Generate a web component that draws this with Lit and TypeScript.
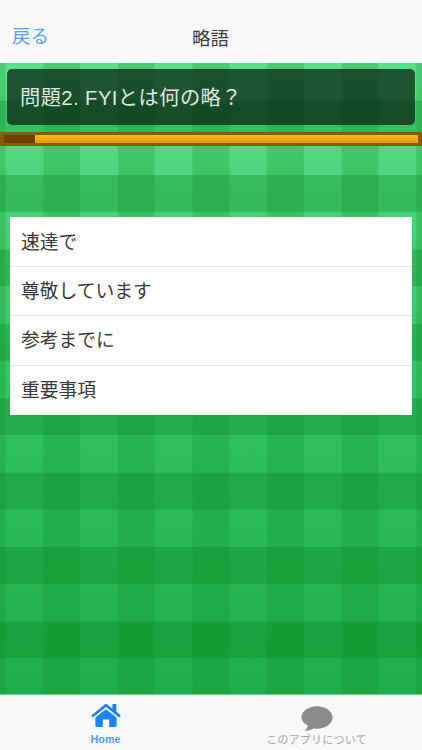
import { LitElement, html, css } from "lit";
import { customElement } from "lit/decorators.js";

@customElement("app-root")
export class AppRoot extends LitElement {
  static styles = css`
    :host {
      display: flex;
      flex-direction: column;
      width: 422px;
      height: 750px;
      overflow: hidden;
      font-family: "Liberation Sans", "Noto Sans CJK JP", sans-serif;
    }
    .nav {
      height: 63px;
      flex: none;
      background: #f8f8f8;
      display: grid;
      grid-template-columns: 1fr auto 1fr;
      padding: 25px 12px 0;
      box-sizing: border-box;
      font-size: 18.5px;
    }
    .back { color: #559df2; line-height: 24px; }
    .title { color: #3d3d3d; line-height: 24px; margin-top: 2px; margin-left: -1px; }
    .main {
      flex: 1;
      min-height: 0;
      display: flex;
      flex-direction: column;
      background-image:
        linear-gradient(90deg, transparent 0 37.3px, rgba(0, 130, 25, 0.2) 37.3px 74.6px),
        linear-gradient(180deg, transparent 0 37.6px, rgba(0, 130, 25, 0.3) 37.6px 74.4px),
        linear-gradient(180deg, #5adf8a 0, #30bf5e 60%, #1fae49 100%);
      background-size: 74.6px 100%, 100% 74.4px, 100% 100%;
      background-position: 5.5px 0, 0 0, 0 0;
      background-repeat: repeat-x, repeat-y, no-repeat;
    }
    .question {
      margin: 6px 7px 0;
      height: 56px;
      box-sizing: border-box;
      border-radius: 5px;
      background: rgba(12, 38, 22, 0.75);
      color: #dfe7e1;
      font-size: 20.3px;
      letter-spacing: 0.4px;
      display: flex;
      align-items: center;
      padding: 0 13px 3px;
    }
    .progress {
      margin-top: 7px;
      height: 14px;
      box-sizing: border-box;
      border: 3px solid #8b5a06;
      border-left-width: 4px;
      border-right-width: 4px;
      background: linear-gradient(180deg, #fbb81e, #e89a08);
      display: flex;
    }
    .done { width: 31px; background: #6d4003; }
    .list {
      margin: 71px 10px 0;
      background: #fff;
      display: flex;
      flex-direction: column;
    }
    .row {
      height: 49.5px;
      box-sizing: border-box;
      display: flex;
      align-items: center;
      padding: 0 0 3px 11px;
      font-size: 18.8px;
      color: #3a3a3a;
      border-bottom: 1px solid #e6e6e6;
    }
    .row:first-child { padding-bottom: 1px; }
    .row:last-child { border-bottom: 0; }
    .tabs {
      height: 56px;
      flex: none;
      background: #f8f8f8;
      border-top: 1px solid #62d587;
      display: grid;
      grid-template-columns: 1fr 1fr;
      box-sizing: border-box;
    }
    .tab {
      display: flex;
      flex-direction: column;
      align-items: center;
      font-size: 11px;
    }
    .tab svg { display: block; }
    .home { color: #4f9cf5; font-weight: bold; padding-top: 8px; }
    .about { color: #a6a6a6; padding-top: 11px; }
    .label { line-height: 14px; }
    .home .label { margin-top: 5px; font-size: 10.8px; }
    .about .label { margin-top: 2px; letter-spacing: 0.2px; }
  `;

  render() {
    const choices = ["速達で", "尊敬しています", "参考までに", "重要事項"];
    return html`
      <div class="nav">
        <div class="back">戻る</div>
        <div class="title">略語</div>
        <div></div>
      </div>
      <div class="main">
        <div class="question">問題2. FYIとは何の略？</div>
        <div class="progress"><div class="done"></div></div>
        <div class="list">
          ${choices.map((c) => html`<div class="row">${c}</div>`)}
        </div>
      </div>
      <div class="tabs">
        <div class="tab home">
          <svg width="30" height="24" viewBox="0 0 30 24">
            <path fill="#1a82fb" d="M15 0.6 L21.4 5.6 V1 H25.4 V8.8 L29.8 12.4 L28.2 14.4 L15 3.9 L1.8 14.4 L0.2 12.4 Z" />
            <path fill="#1a82fb" d="M15 6.2 L25.6 14.6 V22.4 Q25.6 24 24 24 H18.2 V16.6 H11.8 V24 H6 Q4.4 24 4.4 22.4 V14.6 Z" />
          </svg>
          <div class="label">Home</div>
        </div>
        <div class="tab about">
          <svg width="32" height="25" viewBox="0 0 32 25">
            <path fill="#8c8c8c" d="M16 0.3 C24.6 0.3 31.6 5.4 31.6 11.6 C31.6 17.8 24.6 22.8 16 22.8 C14.8 22.8 13.6 22.7 12.5 22.5 C10.2 24 7.4 24.8 3.6 24.6 C5.4 23.4 6.6 21.4 6.8 19.6 C2.8 17.6 0.4 14.8 0.4 11.6 C0.4 5.4 7.4 0.3 16 0.3 Z" />
          </svg>
          <div class="label">このアプリについて</div>
        </div>
      </div>
    `;
  }
}
